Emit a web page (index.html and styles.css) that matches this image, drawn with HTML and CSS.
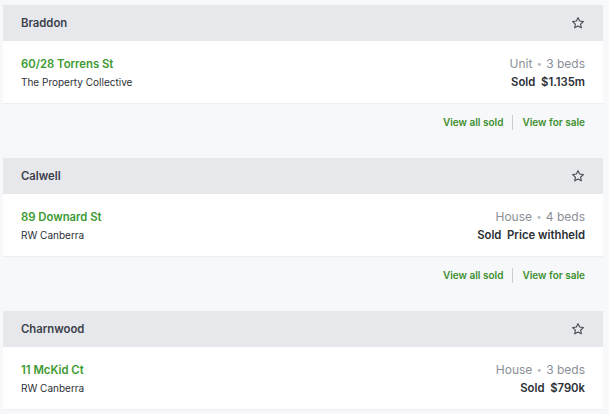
FILE: index.html
```html
<!DOCTYPE html>
<html>
<head>
  <title>Recent sales</title>
  <link rel="stylesheet" href="styles.css">
</head>
<body>
  <div class="suburbs">

    <div class="suburb">
      <div class="suburb-head">
        <span class="suburb-name">Braddon</span>
        <svg class="star" viewBox="0 0 24 24" width="14" height="14"><path d="M12 2.8l2.8 5.9 6.4.8-4.7 4.4 1.2 6.4L12 17.2l-5.7 3.1 1.2-6.4-4.7-4.4 6.4-.8z"/></svg>
      </div>
      <div class="sale">
        <div class="sale-left">
          <div class="address">60/28 Torrens St</div>
          <div class="agency">The Property Collective</div>
        </div>
        <div class="sale-right">
          <div class="type">Unit <span class="dot">&bull;</span> 3 beds</div>
          <div class="price">Sold&nbsp; $1.135m</div>
        </div>
      </div>
      <div class="links">
        <a href="#">View all sold</a>
        <span class="sep"></span>
        <a href="#">View for sale</a>
      </div>
    </div>

    <div class="suburb">
      <div class="suburb-head">
        <span class="suburb-name">Calwell</span>
        <svg class="star" viewBox="0 0 24 24" width="14" height="14"><path d="M12 2.8l2.8 5.9 6.4.8-4.7 4.4 1.2 6.4L12 17.2l-5.7 3.1 1.2-6.4-4.7-4.4 6.4-.8z"/></svg>
      </div>
      <div class="sale">
        <div class="sale-left">
          <div class="address">89 Downard St</div>
          <div class="agency">RW Canberra</div>
        </div>
        <div class="sale-right">
          <div class="type">House <span class="dot">&bull;</span> 4 beds</div>
          <div class="price">Sold&nbsp; Price withheld</div>
        </div>
      </div>
      <div class="links">
        <a href="#">View all sold</a>
        <span class="sep"></span>
        <a href="#">View for sale</a>
      </div>
    </div>

    <div class="suburb">
      <div class="suburb-head">
        <span class="suburb-name">Charnwood</span>
        <svg class="star" viewBox="0 0 24 24" width="14" height="14"><path d="M12 2.8l2.8 5.9 6.4.8-4.7 4.4 1.2 6.4L12 17.2l-5.7 3.1 1.2-6.4-4.7-4.4 6.4-.8z"/></svg>
      </div>
      <div class="sale">
        <div class="sale-left">
          <div class="address">11 McKid Ct</div>
          <div class="agency">RW Canberra</div>
        </div>
        <div class="sale-right">
          <div class="type">House <span class="dot">&bull;</span> 3 beds</div>
          <div class="price">Sold&nbsp; $790k</div>
        </div>
      </div>
    </div>

  </div>
</body>
</html>
```

FILE: styles.css
```css
body {
  margin: 0;
  background: #f7f8fa;
  font-family: Inter, "Noto Sans", sans-serif;
  color: #2b2f36;
}
.suburbs {
  padding: 5px 6px 0 3px;
}
.suburb {
  margin-bottom: 18px;
}
.suburb-head {
  height: 36px;
  display: flex;
  align-items: center;
  justify-content: space-between;
  padding: 0 18px;
  background: #e6e8ec;
}
.suburb-name {
  font-size: 11.3px;
  font-weight: 600;
  color: #3b404a;
}
.star {
  fill: none;
  stroke: #3b404a;
  stroke-width: 1.8;
  stroke-linejoin: round;
}
.sale {
  height: 62px;
  display: flex;
  align-items: center;
  justify-content: space-between;
  padding: 0 18px;
  background: #fff;
  border-bottom: 1px solid #eceef1;
}
.address {
  font-size: 11.3px;
  font-weight: 600;
  color: #3d9a31;
  margin-bottom: 5px;
}
.agency {
  font-size: 10px;
  color: #2b2f36;
}
.sale-right {
  text-align: right;
}
.type {
  font-size: 12px;
  color: #8b9097;
  margin-bottom: 4px;
}
.dot {
  color: #b5b9bf;
  font-size: 9px;
  vertical-align: 1px;
  margin: 0 1px;
}
.price {
  font-size: 11.3px;
  font-weight: 600;
  color: #2b2f36;
}
.links {
  height: 36px;
  display: flex;
  align-items: center;
  justify-content: flex-end;
  padding: 0 18px;
  font-size: 10px;
  font-weight: 600;
}
.links a {
  color: #3d8f30;
  text-decoration: none;
}
.sep {
  width: 1px;
  height: 15px;
  background: #c9ccd1;
  margin: 0 9px;
}
```
